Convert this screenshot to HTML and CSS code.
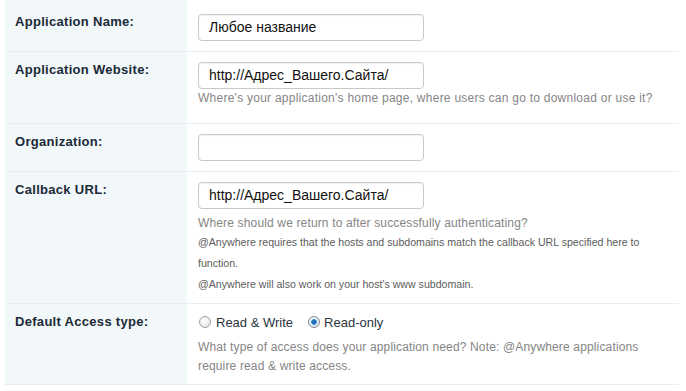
FILE: index.html
```html
<!DOCTYPE html>
<html lang="en">
<head>
<meta charset="utf-8">
<title>Application settings</title>
<link rel="stylesheet" href="styles.css">
</head>
<body>
<div class="form">
  <div class="row first">
    <div class="label">Application Name:</div>
    <div class="field">
      <div class="input">Любое название</div>
    </div>
  </div>
  <div class="row">
    <div class="label">Application Website:</div>
    <div class="field">
      <div class="input">http://Адрес_Вашего.Сайта/</div>
      <p class="hint hint-tight">Where's your application's home page, where users can go to download or use it?</p>
    </div>
  </div>
  <div class="row">
    <div class="label">Organization:</div>
    <div class="field">
      <div class="input"></div>
    </div>
  </div>
  <div class="row row-callback">
    <div class="label">Callback URL:</div>
    <div class="field">
      <div class="input">http://Адрес_Вашего.Сайта/</div>
      <p class="hint hint-spaced">Where should we return to after successfully authenticating?</p>
      <p class="small">@Anywhere requires that the hosts and subdomains match the callback URL specified here to function.</p>
      <p class="small">@Anywhere will also work on your host's www subdomain.</p>
    </div>
  </div>
  <div class="row row-access">
    <div class="label">Default Access type:</div>
    <div class="field">
      <div class="radios">
        <span class="radio"></span><span class="radio-text">Read &amp; Write</span>
        <span class="radio checked"></span><span class="radio-text">Read-only</span>
      </div>
      <p class="hint hint-access">What type of access does your application need? Note: @Anywhere applications require read &amp; write access.</p>
    </div>
  </div>
</div>
</body>
</html>
```
FILE: styles.css
```css
html, body {
  margin: 0;
  padding: 0;
  background: #ffffff;
}

body {
  font-family: "Liberation Sans", Arial, sans-serif;
}

.form {
  margin-left: 5px;
  width: 674px;
}

.row {
  display: grid;
  grid-template-columns: 182px 1fr;
  border-bottom: 1px solid #e7eef4;
}

.label {
  background: #f2f7fa;
  padding: 11px 10px 10px 10px;
  font-size: 13px;
  line-height: 14px;
  font-weight: bold;
  letter-spacing: 0.3px;
  color: #1b2a38;
}

.first .label {
  padding-top: 15px;
}

.field {
  padding: 10px 20px 10px 11px;
}

.first .field {
  padding-top: 14px;
}

.input {
  box-sizing: border-box;
  width: 226px;
  height: 27px;
  border: 1px solid #c9c9c9;
  border-radius: 4px;
  box-shadow: inset 0 1px 1px rgba(0, 0, 0, 0.05);
  background: #fff;
  padding: 0 10px;
  font-size: 14px;
  line-height: 25px;
  color: #111;
}

.hint {
  margin: 0;
  font-size: 12px;
  line-height: 18px;
  color: #858585;
  letter-spacing: 0.15px;
}

.hint-tight {
  margin-bottom: 6px;
  letter-spacing: 0.25px;
}

.hint-spaced {
  margin-top: 5px;
}

.small {
  margin: 0;
  font-size: 10.6px;
  line-height: 21px;
  color: #5c5c5c;
}

.row-callback .field {
  padding-bottom: 8px;
}

.radios {
  display: flex;
  align-items: center;
  height: 16px;
  font-size: 13px;
  color: #2a3440;
  padding-left: 1px;
}

.radio {
  box-sizing: border-box;
  width: 12px;
  height: 12px;
  border-radius: 50%;
  border: 1px solid #9da3a8;
  background: radial-gradient(circle at 40% 35%, #ffffff 0%, #f1f1f1 45%, #d6d9dc 100%);
  margin-right: 5px;
  flex: none;
}

.radio.checked {
  background:
    radial-gradient(circle at 50% 50%, #1a5f9e 0, #2f86cf 2.5px, transparent 3.2px),
    radial-gradient(circle at 40% 35%, #ffffff 0%, #eef2f5 45%, #cfd6dc 100%);
  border-color: #7d8a96;
  margin-left: 15px;
  margin-right: 4px;
}

.hint-access {
  margin-top: 8px;
  line-height: 19px;
}

.row-access .field {
  padding-bottom: 8px;
}
```
